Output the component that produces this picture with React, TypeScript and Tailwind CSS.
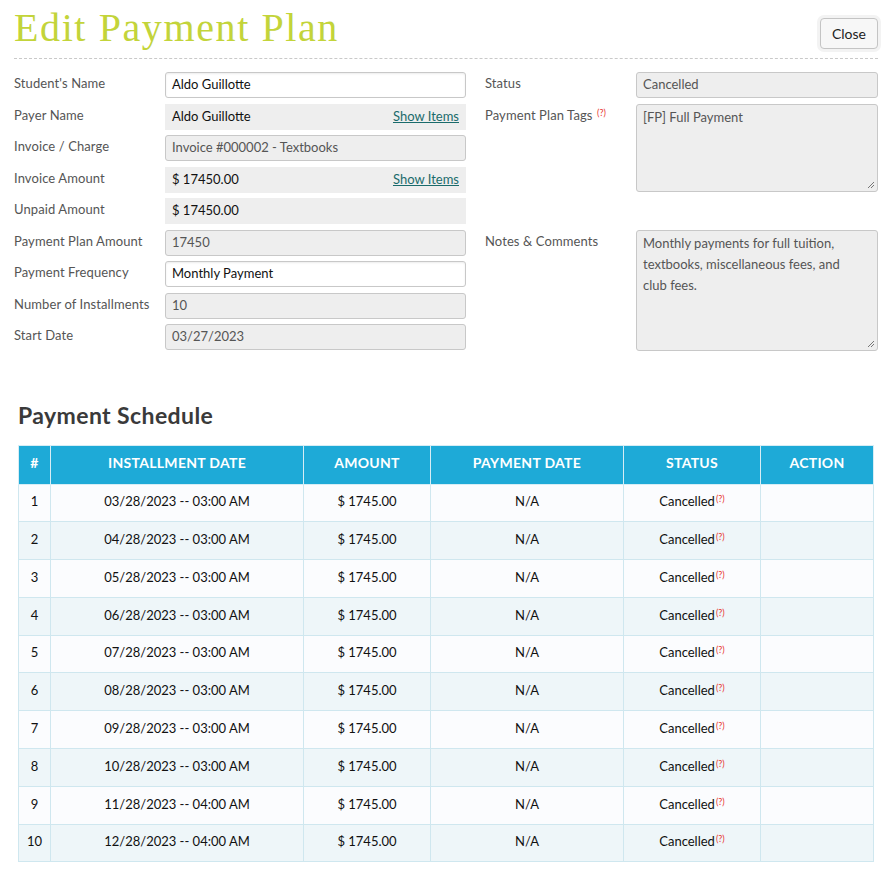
import React from "react";

const FONT = { fontFamily: "Lato, 'Noto Sans', Arial, sans-serif" };

const ROWS = [
  ["03/28/2023 -- 03:00 AM"],
  ["04/28/2023 -- 03:00 AM"],
  ["05/28/2023 -- 03:00 AM"],
  ["06/28/2023 -- 03:00 AM"],
  ["07/28/2023 -- 03:00 AM"],
  ["08/28/2023 -- 03:00 AM"],
  ["09/28/2023 -- 03:00 AM"],
  ["10/28/2023 -- 03:00 AM"],
  ["11/28/2023 -- 04:00 AM"],
  ["12/28/2023 -- 04:00 AM"],
];

function Help() {
  return (
    <sup className="relative -top-[4px] ml-[1px] text-[9px] font-normal text-[#e8342f]">
      (?)
    </sup>
  );
}

function Label({ children }: { children: React.ReactNode }) {
  return (
    <div className="w-[151px] shrink-0 pt-[2px] text-[13px] leading-[18px] tracking-[0.1px] text-[#555]">
      {children}
    </div>
  );
}

function TextInput({ value }: { value: string }) {
  return (
    <div className="flex h-[26px] flex-1 items-center rounded-[3px] border border-[#c8c8c8] bg-white px-[6px] text-[13px] text-[#111] shadow-[inset_0_1px_2px_rgba(0,0,0,0.08)]">
      {value}
    </div>
  );
}

function Disabled({ value }: { value: string }) {
  return (
    <div className="flex h-[26px] flex-1 items-center rounded-[3px] border border-[#c8c8c8] bg-[#eee] px-[6px] text-[13px] text-[#555]">
      {value}
    </div>
  );
}

function Plain({ value, items }: { value: string; items?: boolean }) {
  return (
    <div className="flex h-[26px] flex-1 items-center justify-between bg-[#eee] px-[7px] text-[13px] text-[#111]">
      <span>{value}</span>
      {items ? (
        <span className="text-[13px] text-[#1a6b6b] underline">Show Items</span>
      ) : null}
    </div>
  );
}

function Row({ label, children }: { label: React.ReactNode; children: React.ReactNode }) {
  return (
    <div className="mb-[5.5px] flex">
      <Label>{label}</Label>
      {children}
    </div>
  );
}

function Resize() {
  return (
    <svg className="absolute bottom-[2px] right-[2px]" width="8" height="8" viewBox="0 0 8 8">
      <path d="M7 1 L1 7 M7 4 L4 7" stroke="#777" strokeWidth="1" />
    </svg>
  );
}

export default function App() {
  return (
    <div className="min-h-[877px] bg-white px-[14px]" style={FONT}>
      <div className="flex items-start justify-between pt-[6px]">
        <h1
          className="text-[40px] leading-[44px] tracking-[1.6px] text-[#c3d43a]"
          style={{ fontFamily: "'Liberation Serif', serif", fontWeight: 300 }}
        >
          Edit Payment Plan
        </h1>
        <button className="mt-[12px] h-[31px] w-[58px] rounded-[4px] border border-[#c4c4c4] bg-[#f7f7f7] text-[14px] text-[#222] shadow-[0_0_0_3px_#f3f3f3]">
          Close
        </button>
      </div>
      <div className="mt-[8px] border-t border-dashed border-[#c9c9c9]" />

      <div className="mt-[13px] flex gap-[19px]">
        <div className="w-[452px]">
          <Row label="Student's Name">
            <TextInput value="Aldo Guillotte" />
          </Row>
          <Row label="Payer Name">
            <Plain value="Aldo Guillotte" items />
          </Row>
          <Row label="Invoice / Charge">
            <Disabled value="Invoice #000002 - Textbooks" />
          </Row>
          <Row label="Invoice Amount">
            <Plain value="$ 17450.00" items />
          </Row>
          <Row label="Unpaid Amount">
            <Plain value="$ 17450.00" />
          </Row>
          <Row label="Payment Plan Amount">
            <Disabled value="17450" />
          </Row>
          <Row label="Payment Frequency">
            <TextInput value="Monthly Payment" />
          </Row>
          <Row label="Number of Installments">
            <Disabled value="10" />
          </Row>
          <Row label="Start Date">
            <Disabled value="03/27/2023" />
          </Row>
        </div>

        <div className="flex-1">
          <Row label="Status">
            <Disabled value="Cancelled" />
          </Row>
          <div className="flex">
            <Label>
              Payment Plan Tags <Help />
            </Label>
            <div className="relative h-[88px] flex-1 rounded-[3px] border border-[#c8c8c8] bg-[#eee] px-[6px] py-[3px] text-[13px] leading-[19px] text-[#555]">
              [FP] Full Payment
              <Resize />
            </div>
          </div>
          <div className="mt-[38px] flex">
            <Label>Notes &amp; Comments</Label>
            <div className="relative h-[121px] flex-1 rounded-[3px] border border-[#c8c8c8] bg-[#eee] py-[2px] pl-[6px] pr-[26px] text-[13px] leading-[21px] text-[#555]">
              Monthly payments for full tuition, textbooks, miscellaneous fees, and club fees.
              <Resize />
            </div>
          </div>
        </div>
      </div>

      <h2 className="mt-[45px] pl-[4px] text-[23px] font-bold leading-[28px] tracking-[0.4px] text-[#3a3a3a]">
        Payment Schedule
      </h2>

      <table className="ml-[4px] mt-[16px] w-[855px] table-fixed border-collapse text-[13px] text-[#111]">
        <colgroup>
          <col className="w-[32px]" />
          <col className="w-[253px]" />
          <col className="w-[127px]" />
          <col className="w-[193px]" />
          <col className="w-[137px]" />
          <col className="w-[113px]" />
        </colgroup>
        <thead>
          <tr className="h-[39px] bg-[#1eaad7] text-[14px] font-bold uppercase text-white">
            {["#", "Installment Date", "Amount", "Payment Date", "Status", "Action"].map((h) => (
              <th key={h} className="border border-[#d6edf5] pb-[4px] text-center font-bold tracking-[0.3px]">
                {h}
              </th>
            ))}
          </tr>
        </thead>
        <tbody>
          {ROWS.map(([date], i) => (
            <tr key={date} className={i % 2 === 0 ? "h-[37.8px] bg-[#fbfcfe]" : "h-[37.8px] bg-[#eef6f9]"}>
              <td className="border border-[#cfe7ef] pb-[2px] text-center">{i + 1}</td>
              <td className="border border-[#cfe7ef] pb-[2px] text-center">{date}</td>
              <td className="border border-[#cfe7ef] pb-[2px] text-center">$ 1745.00</td>
              <td className="border border-[#cfe7ef] pb-[2px] text-center">N/A</td>
              <td className="border border-[#cfe7ef] pb-[2px] text-center">
                Cancelled
                <Help />
              </td>
              <td className="border border-[#cfe7ef]" />
            </tr>
          ))}
        </tbody>
      </table>
    </div>
  );
}
